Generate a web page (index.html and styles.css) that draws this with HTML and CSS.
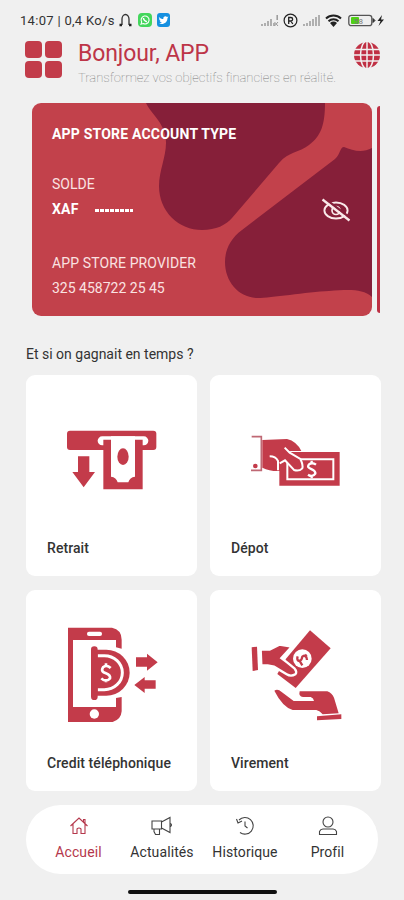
FILE: index.html
```html
<!DOCTYPE html>
<html lang="fr">
<head>
    <meta charset="utf-8">
    <title>Accueil</title>
    <link rel="stylesheet" href="styles.css">
</head>
<body>
    <div class="status-bar">
        <span class="status-time">14:07 | 0,4 Ko/s</span>
        <svg class="headset" width="15" height="15" viewBox="0 0 15 15">
            <path d="M4 12V6a3.5 4.5 0 0 1 7 0v6" fill="none" stroke="#333" stroke-width="1.3"/>
            <path d="M1.500 12H4M11 12h2.500" stroke="#222" stroke-width="2.4"/>
        </svg>
        <svg class="whatsapp" width="14" height="14" viewBox="0 0 14 14">
            <rect width="14" height="14" rx="4" fill="#43d65c"/>
            <path d="M3 11.2l.7-2.1a4 4 0 1 1 1.5 1.4z" fill="none" stroke="#fff" stroke-width="1.1"/>
            <path d="M5.4 5c.2 2 1.5 3.3 3.5 3.7" fill="none" stroke="#fff" stroke-width="1.4"/>
        </svg>
        <svg class="twitter" width="13" height="14" viewBox="0 0 13 14">
            <rect width="13" height="14" rx="3" fill="#1690e0"/>
            <path d="M2 4c1.2 1.4 2.6 2 4.3 2C6 3.6 8.6 2.5 10 4l1.5-.4-1 1.5C10.5 10 5.5 12.5 2 10.3c1.2 0 2-.2 2.8-.8C3.5 9.2 3 8.6 2.8 8h.9C2.5 7.3 2.2 6.7 2.2 6l.8.2C2 5.4 1.7 4.8 2 4z" fill="#fff"/>
        </svg>
        <span class="spacer"></span>
        <svg class="signal" width="19" height="13" viewBox="0 0 19 13">
            <path d="M2 12v-2M5 12V9M8 12V7M11 12V5M14 12V9M17.2 1v5" stroke="#999" stroke-width="1.5"/>
            <path d="M14.5 8l3.5 4M18 8l-3.5 4" stroke="#999" stroke-width="1"/>
        </svg>
        <svg class="registered" width="15" height="15" viewBox="0 0 15 15">
            <circle cx="7.5" cy="7.5" r="6.4" fill="none" stroke="#222" stroke-width="1.2"/>
            <path d="M5.7 11V4.5h2.2a1.7 1.7 0 0 1 0 3.5H5.7M7.8 8l2 3" fill="none" stroke="#222" stroke-width="1.3"/>
        </svg>
        <svg class="signal" width="18" height="13" viewBox="0 0 18 13">
            <path d="M1 12v-2M4 12V9M7 12V7M10 12V5M13 12V3M16 12V1" stroke="#999" stroke-width="1.5"/>
        </svg>
        <svg class="wifi" width="17" height="13" viewBox="0 0 17 13">
            <path d="M1 4.5a11 11 0 0 1 15 0M3.5 7.2a7.5 7.5 0 0 1 10 0" fill="none" stroke="#222" stroke-width="2"/>
            <path d="M5 9a5.500 5.500 0 0 1 7 0l-3.500 4z" fill="#222"/>
        </svg>
        <svg class="battery" width="38" height="13" viewBox="0 0 38 13">
            <rect x=".8" y="1.3" width="23" height="10.4" rx="2.5" fill="#eee" stroke="#555" stroke-width="1.3"/>
            <path d="M25 4.5l2 2-2 2z" fill="#333" stroke="#333"/>
            <rect x="3" y="3" width="8" height="7" rx="1" fill="#4fd015"/>
            <text x="6" y="9.6" class="battery-level">58</text>
            <path d="M34 1l-4.5 6h3L30.5 12l5.5-6.5h-3z" fill="#222"/>
        </svg>
    </div>

    <header class="header">
        <div class="menu-icon"><i></i><i></i><i></i><i></i></div>
        <div class="greeting">
            <h1>Bonjour, APP</h1>
            <p>Transformez vos objectifs financiers en réalité.</p>
        </div>
        <svg class="globe" width="28" height="28" viewBox="0 0 28 28">
            <circle cx="14" cy="14" r="13" fill="#c02f43"/>
            <g fill="none" stroke="#f0f0f0" stroke-width="1.5">
                <ellipse cx="14" cy="14" rx="6.5" ry="14"/>
                <path d="M14 0v28M0 8.5h28M0 14h28M0 20h28"/>
            </g>
        </svg>
    </header>

    <section class="accounts">
        <div class="account-card">
            <svg class="card-shapes" width="340" height="213" viewBox="0 0 340 213">
                <path d="M114 0C117 7 124 13 128 20C132 27 134 32 134 40C134 54 127 68 127 83C127 109 147 127 170 127C184 127 194 122 200 115L247 60C257 48 267 50 277 42C289 33 293 22 293 0z"/>
                <path d="M340 45C331 50 321 48 312 44C308 44 308 52 303 56L210 127C198 136 193 147 193 159C193 179 207 195 226 195C238 195 275 189 297 188C315 187 330 185 340 194z"/>
            </svg>
            <div class="account-type">APP STORE ACCOUNT TYPE</div>
            <div class="balance-label">SOLDE</div>
            <div class="balance">
                <span class="currency">XAF</span>
                <span class="hidden-amount"></span>
                <svg class="eye-off" width="30" height="26" viewBox="0 0 30 26">
                    <g fill="none" stroke="#fae9ea">
                        <ellipse cx="15" cy="14.500" rx="11.6" ry="8" stroke-width="1.9"/>
                        <circle cx="15" cy="14.500" r="4" stroke-width="1.7"/>
                        <path d="M3 2l27 20.5" stroke="#861f39" stroke-width="2.5"/>
                        <path d="M1.5 3.500l27 21" stroke-width="2.3"/>
                    </g>
                </svg>
            </div>
            <div class="provider">APP STORE PROVIDER</div>
            <div class="account-number">325 458722 25 45</div>
        </div>
        <div class="next-card"></div>
    </section>

    <h2 class="section-title">Et si on gagnait en temps ?</h2>

    <main class="tiles">
        <div class="tile">
            <svg width="120" height="120" viewBox="0 -45 360 360">
                <rect x="51" y="47" width="268" height="58" rx="9"/>
                <rect x="143" y="64" width="152" height="27" rx="13.5" fill="#fff"/>
                <path d="M160 74h118v149H160z"/>
                <path d="M183 64h72v121q-16 2-20 17h-32q-4-15-20-17z" fill="#fff"/>
                <ellipse cx="219" cy="125" rx="17" ry="25"/>
                <path d="M84 124h34v47h17l-34 46-34-46h17z"/>
            </svg>
            <span>Retrait</span>
        </div>
        <div class="tile right">
            <svg width="120" height="120" viewBox="0 -45 360 360">
                <path d="M50 65h29v101H48" fill="none" stroke="#bf6874" stroke-width="5"/>
                <circle cx="61" cy="153" r="7"/>
                <path d="M82 75l74-3q29 7 43 36h-30l-33 5v55q-30 2-54-10z"/>
                <path d="M133 111h181v101H133z"/>
                <path d="M157 133h138v60H157z" fill="none" stroke="#fff" stroke-width="6"/>
                <path d="M104 124q18 0 25 14v28" fill="none" stroke="#fff" stroke-width="6"/>
                <path d="M133 130l20-26 43 28q9 18 6 28-10 10-25 5l-27-29-14 9z"/>
                <path d="M149 98l15 15 32 19q9 18 6 28-10 10-25 5l-27-29-16 9" fill="none" stroke="#fff" stroke-width="6"/>
                <path d="M243 149q-11-8-21-1c-12 16 22 12 19 28q-8 12-22 3M230 137v8M230 182v8" fill="none" stroke="#fff" stroke-width="7"/>
            </svg>
            <span>Dépot</span>
        </div>
        <div class="tile">
            <svg width="120" height="120" viewBox="0 0 360 360">
                <path d="M54 38h132q29 6 29 36v27l-17-4V75H69v201h129v-27l17-3v43q-2 25-27 32H54z"/>
                <rect x="111" y="50" width="45" height="13" rx="6" fill="#fff"/>
                <circle cx="133" cy="297" r="14" fill="#fff"/>
                <path d="M139 104h30a70 69 0 0 1 0 138h-30z"/>
                <path d="M143 122h20a54 51 0 0 1 0 102h-20" fill="none" stroke="#fff" stroke-width="9"/>
                <rect x="123" y="94" width="20" height="161" rx="10"/>
                <path d="M182 159q-12-12-23-2c-13 22 26 13 21 33q-12 14-26 0M168 145v10M168 192v10" fill="none" stroke="#fff" stroke-width="8"/>
                <path d="M258 127h33v-11l32 26-32 25v-12h-33zM317 196h-33v-10l-31 24 31 24v-13h33z"/>
            </svg>
            <span>Credit téléphonique</span>
        </div>
        <div class="tile right">
            <svg width="120" height="120" viewBox="0 0 360 360">
                <path d="M50 97l16-2 3 70-16 3z"/>
                <path d="M225 46l62 54-105 119-55-42 26-46z"/>
                <path d="M77 104h27l29-15 37 6-31 34 18 14 22 18q8 9 2 17-13 8-26 0l-38-23-19-4H79z" stroke="#fff" stroke-width="7"/>
                <circle cx="202" cy="131" r="28" fill="#fff"/>
                <path d="M216 135q-2-19-14-10-2 12-9 13-9-2-5-14M215 119l-7 7M194 138l8 13" fill="none" stroke="#c33b4a" stroke-width="7"/>
                <path d="M118 227q10-7 22 4l36 27h61q-1-9-10-12h-23q-14-1-10-17h83q14 5 20 19l14 47-48 3q-8-11-19-13h-71q-31-10-55-58z"/>
                <path d="M246 304l73-6v14l-73 4z"/>
            </svg>
            <span>Virement</span>
        </div>
    </main>

    <nav class="bottom-nav">
        <a class="nav-item active">
            <svg width="20" height="20" viewBox="0 0 20 20"><path d="M1.5 10L10 2l8.5 8M4 8v9.5h4V13q2-2 4 0v4.5h4V8M14.5 6V3.5H16v4"/></svg>
            <span>Accueil</span>
        </a>
        <a class="nav-item news">
            <svg width="22" height="20" viewBox="0 0 22 20"><path d="M1 5h9.5v8H1zM10.5 6L19 1.5v15L10.5 12M3 13v2.5l1.5 3h4V13M19.5 7.5q2 1.5 0 3"/></svg>
            <span>Actualités</span>
        </a>
        <a class="nav-item history">
            <svg width="20" height="20" viewBox="0 0 20 20"><path d="M4 4a8.3 8.3 0 1 1 1 12.5M1.500 3l1.5 4 4-2M10 5.500V10l2.500 2"/></svg>
            <span>Historique</span>
        </a>
        <a class="nav-item profile">
            <svg width="20" height="20" viewBox="0 0 20 20"><circle cx="10" cy="6" r="5"/><path d="M1.5 18.5v-3q1-2.5 3.5-2.5h10q2.5 0 3.5 2.5v3z"/></svg>
            <span>Profil</span>
        </a>
    </nav>
    <div class="home-indicator"></div>
</body>
</html>
```
FILE: styles.css
```css
* {
    box-sizing: border-box;
}
body {
    margin: 0;
    width: 404px;
    height: 900px;
    overflow: hidden;
    background: #f0f0f0;
    font-family: Roboto, sans-serif;
    color: #333;
}
svg {
    display: block;
    flex-shrink: 0;
}

/* status bar */
.status-bar {
    display: flex;
    align-items: center;
    height: 40px;
    padding: 0 18px 0 20px;
}
.status-time {
    width: 96px;
    font-size: 13px;
    letter-spacing: 0.3px;
    white-space: nowrap;
}
.headset { margin-left: 2px; }
.whatsapp { margin-left: 5px; }
.twitter { margin-left: 5px; }
.spacer { flex: 1; }
.registered { margin: 0 5px 0 4px; }
.wifi { margin: 0 6px 0 4px; }
.battery-level {
    font-size: 8px;
    fill: #777;
}

/* header */
.header {
    display: flex;
    height: 63px;
    padding: 1px 23px 0 25px;
}
.menu-icon {
    display: grid;
    grid-template-columns: 17px 17px;
    grid-auto-rows: 17px;
    gap: 3px;
    width: 37px;
}
.menu-icon i {
    background: #c23c4a;
    border-radius: 4px;
}
.greeting {
    flex: 1;
    margin-left: 16px;
    white-space: nowrap;
}
.greeting h1 {
    margin: 0;
    font-size: 23px;
    line-height: 25px;
    font-weight: 400;
    letter-spacing: -0.1px;
    color: #bd3548;
}
.greeting p {
    margin: 4px 0 0;
    font-size: 13px;
    line-height: 16px;
    font-weight: 100;
    letter-spacing: -0.03px;
    color: #777;
}

/* account cards */
.accounts {
    display: flex;
    align-items: center;
    gap: 5px;
    height: 213px;
    padding-left: 32px;
}
.account-card {
    position: relative;
    width: 340px;
    height: 213px;
    padding: 22px 20px 0;
    border-radius: 9px;
    overflow: hidden;
    background: #c2414b;
    color: #fae3e2;
    font-size: 14px;
    line-height: 18px;
}
.card-shapes {
    position: absolute;
    top: 0;
    left: 0;
    fill: #861f39;
}
.account-card > div {
    position: relative;
    white-space: nowrap;
}
.account-type {
    font-weight: 700;
    letter-spacing: 0.2px;
    color: #fff;
}
.balance-label { margin-top: 32px; }
.balance {
    display: flex;
    align-items: center;
    height: 26px;
    margin-top: 3px;
}
.currency {
    width: 43px;
    font-weight: 700;
    letter-spacing: 0.2px;
    color: #fff;
}
.hidden-amount {
    width: 38px;
    height: 3px;
    margin-top: 2px;
    background: repeating-linear-gradient(90deg, #fff 0 4px, transparent 4px 5px);
}
.eye-off {
    margin-left: 188px;
}
.provider {
    margin-top: 32px;
    letter-spacing: 0.12px;
}
.account-number { margin-top: 7px; }
.next-card {
    width: 3px;
    height: 207px;
    border-radius: 3px 0 0 3px;
    background: #bd3044;
}

.section-title {
    height: 59px;
    margin: 0;
    padding: 29px 0 0 26px;
    font-size: 14px;
    line-height: 18px;
    font-weight: 400;
}

/* service tiles */
.tiles {
    display: grid;
    grid-template-columns: 171px 171px;
    grid-auto-rows: 201px;
    gap: 14px 13px;
    padding-left: 26px;
}
.tile {
    padding: 25px 0 0 24px;
    background: #fff;
    border-radius: 9px;
    fill: #c33b4a;
}
.tile.right {
    padding-left: 25px;
}
.tile span {
    display: block;
    margin: 19px 0 0 -3px;
    font-size: 14px;
    line-height: 18px;
    font-weight: 500;
    letter-spacing: 0.08px;
}
.tile.right span {
    margin-left: -4px;
}

/* bottom navigation */
.bottom-nav {
    display: flex;
    width: 352px;
    height: 69px;
    margin: 14px 0 0 26px;
    padding: 11px 0 0 13px;
    border-radius: 35px;
    background: #fff;
}
.nav-item {
    display: flex;
    flex-direction: column;
    align-items: center;
    gap: 7px;
    width: 79px;
    font-size: 14px;
    line-height: 18px;
    letter-spacing: 0.1px;
}
.nav-item.news { width: 88px; }
.nav-item.history { width: 78px; }
.nav-item.profile { width: 87px; }
.nav-item svg {
    fill: none;
    stroke: #444;
    stroke-width: 1.1;
}
.nav-item.active { color: #b5384c; }
.nav-item.active svg { stroke: #b5384c; }
.home-indicator {
    width: 149px;
    height: 4px;
    margin: 16px 0 0 128px;
    border-radius: 2px;
    background: #111;
}
```
